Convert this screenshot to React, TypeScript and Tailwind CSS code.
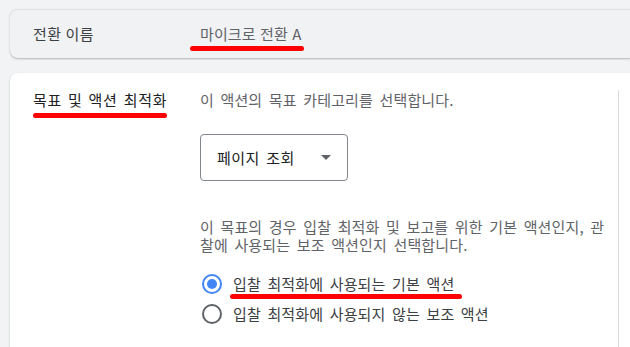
import { FC } from "react";

const font = "font-['Noto_Sans_CJK_KR','Noto_Sans',sans-serif]";

const Mark: FC<{ className: string }> = ({ className }) => (
    <span className={`absolute h-[5px] rounded-full bg-[#ff0000] ${className}`} />
);

const App: FC = () => {
    return (
        <div className={`h-screen overflow-hidden bg-[#f1f3f4] pl-[10px] pt-[9px] ${font}`}>
            {/* conversion name */}
            <div className="flex h-[49px] items-center rounded-l-lg border-t border-[#dfe1e5] bg-[#f1f2f4] shadow-[0_1px_2px_rgba(60,64,67,0.35)]">
                <div className="w-[190px] pl-[23px] text-[15px] leading-[20px] tracking-[0.5px] text-[#3c4043]">전환 이름</div>
                <div className="relative text-[15px] leading-[20px] tracking-[0.1px] [word-spacing:1px] text-[#5f6368]">
                    마이크로 전환 A
                    <Mark className="left-[-10px] top-[22px] w-[114px]" />
                </div>
            </div>

            {/* goal & action optimization */}
            <div className="mt-[15px] flex h-[300px] rounded-tl-lg bg-white shadow-[0_1px_2px_rgba(60,64,67,0.3)]">
                <div className="w-[190px] shrink-0 pl-[23px] pt-[17px]">
                    <div className="relative w-fit text-[15px] leading-[20px] tracking-[0.7px] [word-spacing:2px] text-[#202124]">
                        목표 및 액션 최적화
                        <Mark className="left-0 top-[23px] w-[134px]" />
                    </div>
                </div>
                <div className="mt-[17px] w-[419px] shrink-0 border-r border-[#dadce0] text-[15px] tracking-[0.15px] [word-spacing:3px]">
                    <p className="leading-[20px] text-[#5f6368]">이 액션의 목표 카테고리를 선택합니다.</p>

                    <div className="mt-[24px] flex h-[47px] w-[148px] items-center justify-between rounded-[4px] border border-[#80868b] pl-[16px] pr-[16px]">
                        <span className="leading-[20px] tracking-[0.4px] text-[#202124]">페이지 조회</span>
                        <svg width="10" height="5" viewBox="0 0 10 5">
                            <path d="M0 0h10L5 5z" fill="#5f6368" />
                        </svg>
                    </div>

                    <p className="mt-[37px] leading-[18px] text-[#5f6368]">
                        이 목표의 경우 입찰 최적화 및 보고를 위한 기본 액션인지, 관<br />
                        찰에 사용되는 보조 액션인지 선택합니다.
                    </p>

                    <div className="mt-[15px] flex flex-col">
                        <label className="flex h-[30px] items-center gap-[11px] pl-[2px]">
                            <span className="flex h-[20px] w-[20px] items-center justify-center rounded-full border-2 border-[#4285f4]">
                                <span className="h-[10px] w-[10px] rounded-full bg-[#4285f4]" />
                            </span>
                            <span className="relative leading-[20px] text-[#3c4043]">
                                입찰 최적화에 사용되는 기본 액션
                                <Mark className="left-[-3px] top-[20px] w-[232px]" />
                            </span>
                        </label>
                        <label className="flex h-[30px] items-center gap-[11px] pl-[2px]">
                            <span className="h-[20px] w-[20px] rounded-full border-2 border-[#5f6368]" />
                            <span className="leading-[20px] text-[#3c4043]">입찰 최적화에 사용되지 않는 보조 액션</span>
                        </label>
                    </div>
                </div>
            </div>
        </div>
    );
};

export default App;
